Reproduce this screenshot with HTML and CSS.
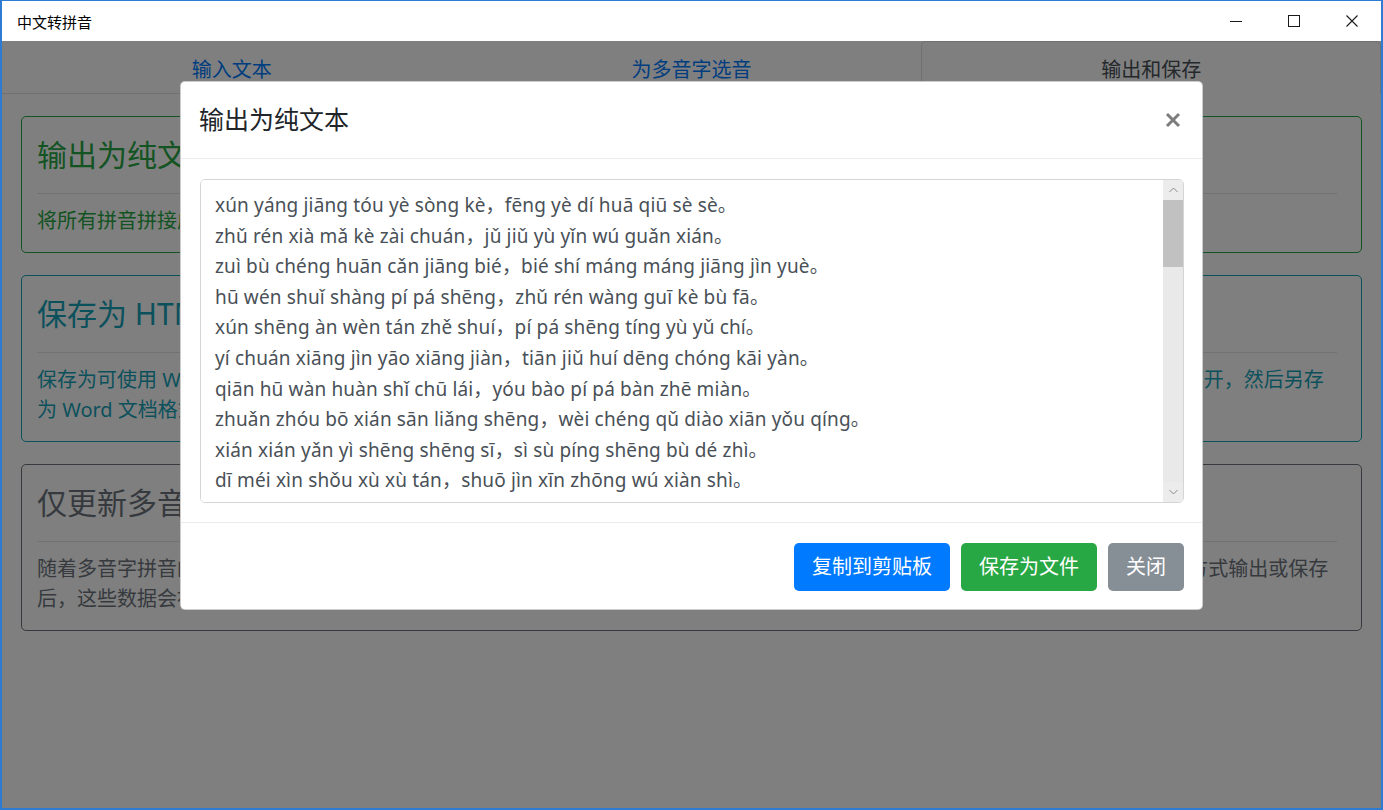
FILE: index.html
```html
<!DOCTYPE html>
<html lang="zh-CN">
<head>
    <meta charset="UTF-8">
    <meta name="viewport" content="width=device-width, initial-scale=1.0">
    <title>中文转拼音</title>
    <link rel="stylesheet" href="styles.css">
</head>
<body>
    <div class="window">
        <div class="titlebar">
            <span class="app-title">中文转拼音</span>
            <div class="caption-buttons">
                <span class="caption-btn">
                    <svg width="12" height="12" viewBox="0 0 12 12"><path d="M0 6.5h12" stroke="#1a1a1a" stroke-width="1"/></svg>
                </span>
                <span class="caption-btn">
                    <svg width="12" height="12" viewBox="0 0 12 12"><rect x="0.5" y="0.5" width="11" height="11" fill="none" stroke="#1a1a1a" stroke-width="1"/></svg>
                </span>
                <span class="caption-btn">
                    <svg width="12" height="12" viewBox="0 0 12 12"><path d="M0.5 0.5l11 11M11.5 0.5l-11 11" stroke="#1a1a1a" stroke-width="1.1"/></svg>
                </span>
            </div>
        </div>

        <div class="app">
            <ul class="tabs">
                <li><a href="#input">输入文本</a></li>
                <li><a href="#polyphone">为多音字选音</a></li>
                <li class="active"><a href="#output">输出和保存</a></li>
            </ul>

            <div class="content">
                <div class="card card-success">
                    <h4 class="card-title">输出为纯文本</h4>
                    <hr>
                    <p class="card-text">将所有拼音拼接成纯文本，您可以把它复制到剪贴板，也可以保存为文本文件。</p>
                </div>
                <div class="card card-info">
                    <h4 class="card-title">保存为 HTML 文件</h4>
                    <hr>
                    <p class="card-text">保存为可使用 Word 打开的 HTML 文件，拼音以注音的形式标注在汉字的上方。若需要对文档进行更多修改和编辑，请使用 Word 打开，然后另存<br>为 Word 文档格式（.docx）即可。</p>
                </div>
                <div class="card card-secondary">
                    <h4 class="card-title">仅更新多音字数据</h4>
                    <hr>
                    <p class="card-text">随着多音字拼音的选择，程序会在后台自动记录下您为文章中每个多音字所选的读音。在您以纯文本、网页、HTML5 或其他的任何方式输出或保存<br>后，这些数据会被更新到多音字词库中，以便下次自动使用。</p>
                </div>
            </div>

            <div class="backdrop"></div>

            <div class="modal">
                <div class="modal-header">
                    <h5 class="modal-title">输出为纯文本</h5>
                    <span class="close">
                        <svg width="16" height="16" viewBox="0 0 16 16"><path d="M2 2l12 12M14 2L2 14" stroke="#7d7d7d" stroke-width="3"/></svg>
                    </span>
                </div>
                <div class="modal-body">
                    <div class="textbox">
                        <textarea readonly>xún yáng jiāng tóu yè sòng kè，fēng yè dí huā qiū sè sè。
zhǔ rén xià mǎ kè zài chuán，jǔ jiǔ yù yǐn wú guǎn xián。
zuì bù chéng huān cǎn jiāng bié，bié shí máng máng jiāng jìn yuè。
hū wén shuǐ shàng pí pá shēng，zhǔ rén wàng guī kè bù fā。
xún shēng àn wèn tán zhě shuí，pí pá shēng tíng yù yǔ chí。
yí chuán xiāng jìn yāo xiāng jiàn，tiān jiǔ huí dēng chóng kāi yàn。
qiān hū wàn huàn shǐ chū lái，yóu bào pí pá bàn zhē miàn。
zhuǎn zhóu bō xián sān liǎng shēng，wèi chéng qǔ diào xiān yǒu qíng。
xián xián yǎn yì shēng shēng sī，sì sù píng shēng bù dé zhì。
dī méi xìn shǒu xù xù tán，shuō jìn xīn zhōng wú xiàn shì。
qīng lǒng màn niǎn mǒ fù tiǎo，chū wéi ní cháng hòu liù yāo。
dà xián cáo cáo rú jí yǔ，xiǎo xián qiè qiè rú sī yǔ。
cáo cáo qiè qiè cuò zá tán，dà zhū xiǎo zhū luò yù pán。
jiān guān yīng yǔ huā dǐ huá，yōu yè quán liú bīng xià nán。
bīng quán lěng sè xián níng jué，níng jué bù tōng shēng zàn xiē。
bié yǒu yōu chóu àn hèn shēng，cǐ shí wú shēng shèng yǒu shēng。
yín píng zhà pò shuǐ jiāng bèng，tiě qí tū chū dāo qiāng míng。
qǔ zhōng shōu bō dāng xīn huà，sì xián yī shēng rú liè bó。
dōng chuán xī fǎng qiǎo wú yán，wéi jiàn jiāng xīn qiū yuè bái。
chén yín fàng bō chā xián zhōng，zhěng dùn yī shang qǐ liǎn róng。
zì yán běn shì jīng chéng nǚ，jiā zài há má líng xià zhù。
shí sān xué dé pí pá chéng，míng shǔ jiào fāng dì yī bù。
qǔ bà céng jiào shàn cái fú，zhuāng chéng měi bèi qiū niáng dù。
wǔ líng nián shào zhēng chán tóu，yī qǔ hóng xiāo bù zhī shù。
diàn tóu yín bì jī jié suì，xuè sè luó qún fān jiǔ wū。
jīn nián huān xiào fù míng nián，qiū yuè chūn fēng děng xián dù。
dì zǒu cóng jūn ā yí sǐ，mù qù zhāo lái yán sè gù。
mén qián lěng luò ān mǎ xī，lǎo dà jià zuò shāng rén fù。
shāng rén zhòng lì qīng bié lí，qián yuè fú liáng mǎi chá qù。
qù lái jiāng kǒu shǒu kōng chuán，rào chuán yuè míng jiāng shuǐ hán。
yè shēn hū mèng shào nián shì，mèng tí zhuāng lèi hóng lán gān。
wǒ wén pí pá yǐ tàn xī，yòu wén cǐ yǔ chóng jī jī。
tóng shì tiān yá lún luò rén，xiāng féng hé bì céng xiāng shí！
wǒ cóng qù nián cí dì jīng，zhé jū wò bìng xún yáng chéng。
xún yáng dì pì wú yīn yuè，zhōng suì bù wén sī zhú shēng。
zhù jìn pén jiāng dì dī shī，huáng lú kǔ zhú rào zhái shēng。
qí jiān dàn mù wén hé wù？dù juān tí xuè yuán āi míng。
chūn jiāng huā zhāo qiū yuè yè，wǎng wǎng qǔ jiǔ huán dú qīng。
qǐ wú shān gē yǔ cūn dí？ōu yā zhāo zhā nán wéi tīng。
jīn yè wén jūn pí pá yǔ，rú tīng xiān yuè ěr zàn míng。
mò cí gèng zuò tán yī qǔ，wèi jūn fān zuò pí pá xíng。
gǎn wǒ cǐ yán liáng jiǔ lì，què zuò cù xián xián zhuǎn jí。
qī qī bù sì xiàng qián shēng，mǎn zuò chóng wén jiē yǎn qì。
zuò zhōng qì xià shuí zuì duō？jiāng zhōu sī mǎ qīng shān shī。</textarea>
                        <div class="scrollbar">
                            <span class="scroll-arrow">
                                <svg width="9" height="6" viewBox="0 0 9 6"><path d="M0.5 5L4.5 1l4 4" fill="none" stroke="#8a8a8a" stroke-width="1"/></svg>
                            </span>
                            <span class="scroll-thumb"></span>
                            <span class="scroll-track"></span>
                            <span class="scroll-arrow">
                                <svg width="9" height="6" viewBox="0 0 9 6"><path d="M0.5 1L4.5 5l4-4" fill="none" stroke="#8a8a8a" stroke-width="1"/></svg>
                            </span>
                        </div>
                    </div>
                </div>
                <div class="modal-footer">
                    <button class="btn btn-primary">复制到剪贴板</button>
                    <button class="btn btn-success">保存为文件</button>
                    <button class="btn btn-secondary">关闭</button>
                </div>
            </div>
        </div>
    </div>
</body>
</html>
```

FILE: styles.css
```css
* {
    margin: 0;
    padding: 0;
    box-sizing: border-box;
}

body {
    font-family: "Noto Sans", "Noto Sans CJK SC", sans-serif;
    background-color: #ffffff;
    color: #212529;
    overflow: hidden;
}

.window {
    display: flex;
    flex-direction: column;
    height: 100vh;
    border: 2px solid #2d7bd2;
    border-top-width: 1px;
}

/* title bar */

.titlebar {
    display: flex;
    align-items: center;
    height: 40px;
    background-color: #ffffff;
}

.app-title {
    margin-left: 15px;
    font-size: 15px;
    color: #000000;
}

.caption-buttons {
    display: flex;
    margin-left: auto;
    height: 100%;
}

.caption-btn {
    display: flex;
    justify-content: center;
    align-items: center;
    width: 58px;
    height: 100%;
}

/* page under the dialog */

.app {
    position: relative;
    flex-grow: 1;
    background-color: #ffffff;
}

.tabs {
    display: flex;
    list-style: none;
    border-bottom: 1px solid #dee2e6;
}

.tabs li {
    flex: 1;
    text-align: center;
}

.tabs a {
    display: block;
    padding: 13px 20px 8px;
    margin-bottom: -1px;
    border: 1px solid transparent;
    border-radius: 5px 5px 0 0;
    font-size: 20px;
    line-height: 30px;
    color: #007bff;
    text-decoration: none;
}

.tabs li.active a {
    color: #495057;
    background-color: #ffffff;
    border-color: #dee2e6 #dee2e6 #ffffff;
}

.content {
    padding: 22px 19px 0;
}

.card {
    margin-bottom: 22px;
    padding: 20px 24px 16px 15px;
    border: 1px solid;
    border-radius: 5px;
}

.card-title {
    font-size: 30px;
    font-weight: normal;
    line-height: 36px;
}

.card hr {
    margin: 20px 0 12px;
    border: 0;
    border-top: 1px solid rgba(0, 0, 0, 0.1);
}

.card-text {
    font-size: 20px;
    line-height: 30px;
}

.card-success {
    border-color: #28a745;
    color: #28a745;
}

.card-info {
    border-color: #17a2b8;
    color: #17a2b8;
}

.card-secondary {
    border-color: #6c757d;
    color: #6c757d;
}

.backdrop {
    position: absolute;
    top: 0;
    left: 0;
    right: 0;
    bottom: 0;
    background-color: rgba(0, 0, 0, 0.5);
}

/* dialog */

.modal {
    position: absolute;
    top: 40px;
    left: 178px;
    width: 1023px;
    background-color: #ffffff;
    border: 1px solid rgba(0, 0, 0, 0.2);
    border-radius: 5px;
}

.modal-header {
    display: flex;
    align-items: center;
    padding: 19px 20px 20px 18px;
    border-bottom: 1px solid #e9ecef;
}

.modal-title {
    font-size: 25px;
    font-weight: normal;
    line-height: 37px;
    color: #212529;
}

.close {
    display: flex;
    margin-left: auto;
    margin-right: 1px;
}

.modal-body {
    padding: 20px 18px 19px 19px;
}

.textbox {
    position: relative;
}

.textbox textarea {
    display: block;
    width: 100%;
    height: 324px;
    padding: 10px 36px 9px 14px;
    border: 1px solid #d3d6d9;
    border-radius: 5px;
    font-family: "Noto Sans", "Noto Sans CJK SC", sans-serif;
    font-size: 19px;
    line-height: 30.6px;
    letter-spacing: 0.15px;
    color: #495057;
    white-space: pre;
    resize: none;
    overflow-y: auto;
    scrollbar-width: none;
}

.scrollbar {
    position: absolute;
    top: 1px;
    right: 1px;
    bottom: 1px;
    width: 20px;
    display: flex;
    flex-direction: column;
    background-color: #e9e9e9;
    border-radius: 0 4px 4px 0;
    overflow: hidden;
}

.scroll-arrow {
    display: flex;
    justify-content: center;
    align-items: center;
    height: 20px;
    background-color: #ececec;
}

.scroll-thumb {
    height: 67px;
    background-color: #c1c1c1;
}

.scroll-track {
    flex-grow: 1;
}

.modal-footer {
    display: flex;
    justify-content: flex-end;
    gap: 11px;
    padding: 20px 18px 18px;
    border-top: 1px solid #e9ecef;
}

.btn {
    padding: 8px 17px;
    border: 1px solid transparent;
    border-radius: 5px;
    font-family: "Noto Sans", "Noto Sans CJK SC", sans-serif;
    font-size: 20px;
    line-height: 30px;
    color: #ffffff;
    cursor: pointer;
}

.btn-primary {
    background-color: #007bff;
}

.btn-success {
    background-color: #28a745;
}

.btn-secondary {
    background-color: #868e96;
}
```
